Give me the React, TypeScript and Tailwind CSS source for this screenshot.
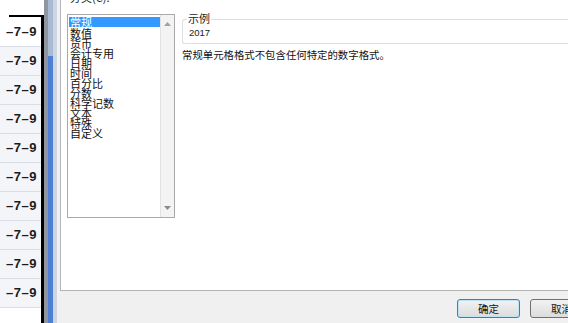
import React from 'react';

const categories = ['常规', '数值', '货币', '会计专用', '日期', '时间', '百分比', '分数', '科学记数', '文本', '特殊', '自定义'];

const cjk = { fontFamily: '"Noto Sans CJK SC", "Liberation Sans", sans-serif' };

function SheetStrip() {
  const rows = Array.from({ length: 10 });
  return (
    <div className="flex h-full shrink-0">
      <div className="w-[41px] flex flex-col bg-white">
        <div className="h-[15px] shrink-0 bg-white" />
        <div className="ml-[9px] -mr-[3px] h-[2px] shrink-0 bg-black" />
        {rows.map((_, i) => (
          <div
            key={i}
            className={`shrink-0 flex items-center justify-end pr-[4px] border-b border-[#d9dee6] ${
              i === 0 ? 'h-[30px] bg-white' : 'h-[29px] bg-[#f3f5f9]'
            }`}
          >
            <span className="text-[13px] font-bold text-[#1b1b1b] tracking-[0.5px]" style={{ fontFamily: '"Liberation Sans", sans-serif' }}>
              –7–9
            </span>
          </div>
        ))}
      </div>
      <div className="w-[3px] bg-black mt-[15px]" />
      <div className="w-[4px] bg-[#8f96a0]" />
      <div className="w-[5px] flex flex-col">
        <div className="h-[56px] bg-[#a9bad3]" />
        <div className="flex-1 bg-[#4f80d4]" />
      </div>
      <div className="w-[4px] bg-[#cdd6e1]" />
      <div className="w-[3px] bg-[#eef1f5]" />
    </div>
  );
}

function CategoryList() {
  return (
    <div className="w-[108px] shrink-0 flex flex-col">
      <div className="h-[14px] relative overflow-hidden">
        <span className="absolute left-[3px] top-[-11px] text-[11px] text-[#222]" style={cjk}>
          分类(C):
        </span>
      </div>
      <div className="h-[204px] border border-[#a9a9a9] bg-white flex">
        <div className="flex-1 pt-[2px] pl-[1px] flex flex-col">
          {categories.map((c, i) => (
            <div
              key={c}
              className={`h-[10px] leading-[10px] text-[11px] pl-[1px] whitespace-nowrap ${
                i === 0 ? 'bg-[#3399ff] text-white h-[10px] mb-[1px]' : 'text-[#111]'
              }`}
              style={cjk}
            >
              {c}
            </div>
          ))}
        </div>
        <div className="w-[14px] bg-[#f3f3f3] border-l border-[#e2e2e2] flex flex-col items-center justify-between py-[7px]">
          <svg width="7" height="4" viewBox="0 0 7 4">
            <path d="M0 4 L3.5 0 L7 4 Z" fill="#a0a0a0" />
          </svg>
          <svg width="7" height="4" viewBox="0 0 7 4">
            <path d="M0 0 L3.5 4 L7 0 Z" fill="#8a8a8a" />
          </svg>
        </div>
      </div>
    </div>
  );
}

function SamplePanel() {
  return (
    <div className="flex-1 pt-[14px] pl-[7px]">
      <div className="relative h-[25px] mt-[5px] border border-r-0 border-[#dcdfe3] rounded-l-[3px]">
        <span className="absolute left-[4px] top-[-10px] bg-white px-[1px] text-[11px] text-[#222]" style={cjk}>
          示例
        </span>
        <div className="pl-[6px] pt-[8px] text-[9.5px] leading-[10px] text-[#222]" style={{ fontFamily: '"Liberation Sans", sans-serif' }}>
          2017
        </div>
      </div>
      <div className="mt-[4px] text-[10.4px] leading-[14px] text-[#111]" style={cjk}>
        常规单元格格式不包含任何特定的数字格式。
      </div>
    </div>
  );
}

export default function App() {
  return (
    <div className="w-[568px] h-[323px] overflow-hidden flex bg-white">
      <SheetStrip />
      <div className="flex-1 flex flex-col min-w-0">
        <div className="h-[291px] shrink-0 bg-white border-l border-b border-[#b4b4b4] flex pl-[6px]">
          <CategoryList />
          <SamplePanel />
        </div>
        <div className="flex-1 bg-[#f0f0f0] flex items-start pt-[8px] pl-[397px] gap-[10px] whitespace-nowrap">
          <button
            className="w-[63px] h-[19px] shrink-0 rounded-[3px] border border-[#3c7fb1] bg-gradient-to-b from-[#f2f2f2] to-[#dcdcdc] shadow-[inset_0_0_0_1px_#bfe3f5] text-[10.5px] leading-[17px] text-[#111]"
            style={cjk}
          >
            确定
          </button>
          <button
            className="w-[63px] h-[19px] shrink-0 rounded-[3px] border border-[#707070] bg-gradient-to-b from-[#f2f2f2] to-[#dcdcdc] text-[10.5px] leading-[17px] text-[#111]"
            style={cjk}
          >
            取消
          </button>
        </div>
      </div>
    </div>
  );
}
